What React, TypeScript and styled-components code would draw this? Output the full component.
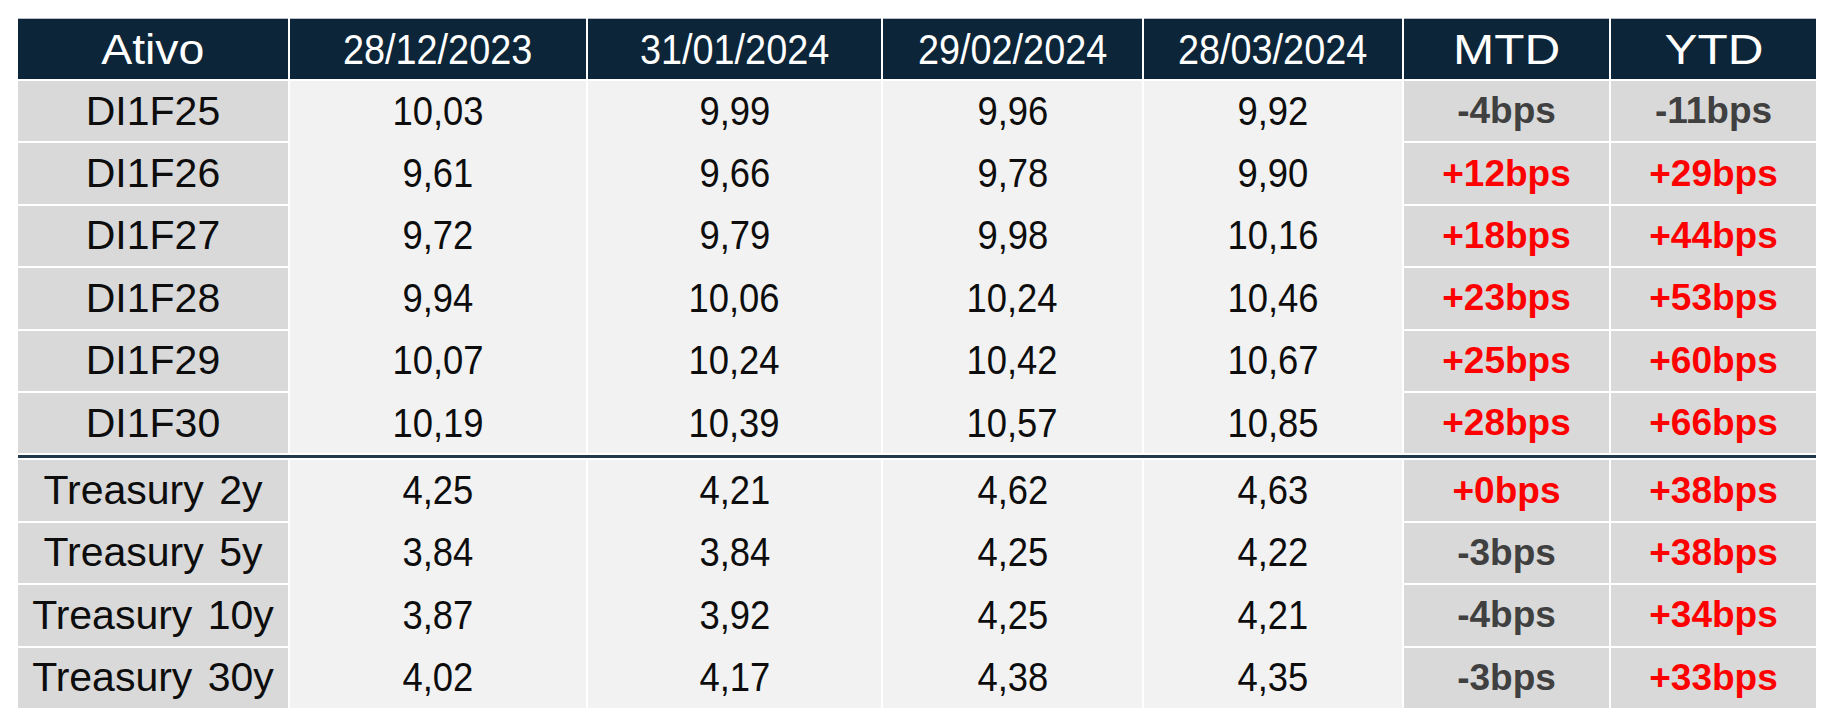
import React from 'react';
import styled, { createGlobalStyle, css } from 'styled-components';

const Color = {
    navy: '#0c2538',
    divider: '#22384b',
    gray: '#d9d9d9',
    light: '#f2f2f2',
    white: '#ffffff',
    text: '#0d0d0d',
    negative: '#404040',
    positive: '#ff0000',
};

const COLUMNS = '270px 296px 293px 259px 258px 205px 205px';

interface RowData {
    ativo: string;
    values: string[];
    mtd: string;
    ytd: string;
}

const GlobalStyle = createGlobalStyle`
    body {
        margin: 0;
        background-color: ${Color.white};
        font-family: 'Liberation Sans', Arial, sans-serif;
    }
`;

const Page = styled.div`
    padding: 18px 0 0 18px;
`;

const Table = styled.div`
    display: flex;
    flex-direction: column;
    width: 1798px;
`;

const Row = styled.div<{ header?: boolean }>`
    display: grid;
    grid-template-columns: ${COLUMNS};
    column-gap: 2px;
    height: ${(props) => (props.header ? '61px' : '62.4px')};
`;

const centered = css`
    display: flex;
    align-items: center;
    justify-content: center;
    box-sizing: border-box;
    white-space: nowrap;
    overflow: hidden;
`;

const HeadCell = styled.div`
    ${centered}
    background-color: ${Color.navy};
    border-top: 1px solid #b8bec4;
    color: ${Color.white};
    font-size: 43px;
`;

const NameCell = styled.div`
    ${centered}
    background-color: ${Color.gray};
    border-top: 2px solid ${Color.white};
    color: ${Color.text};
    font-size: 41px;
    word-spacing: 4px;
`;

const ValueCell = styled.div<{ first?: boolean }>`
    ${centered}
    background-color: ${Color.light};
    border-top: 2px solid ${(props) => (props.first ? Color.white : Color.light)};
    color: ${Color.text};
    font-size: 40px;
`;

const ChangeCell = styled.div<{ positive: boolean }>`
    ${centered}
    background-color: ${Color.gray};
    border-top: 2px solid ${Color.white};
    color: ${(props) => (props.positive ? Color.positive : Color.negative)};
    font-size: 37px;
    font-weight: bold;
`;

// the source slide squeezes numbers and widens some header labels
const Scaled = styled.span<{ scale?: number }>`
    display: inline-block;
    transform: scaleX(${(props) => props.scale ?? 0.91});
`;

const Divider = styled.div`
    margin-top: 2px;
    height: 3px;
    background-color: ${Color.divider};
`;

const dates = ['28/12/2023', '31/01/2024', '29/02/2024', '28/03/2024'];

const futures: RowData[] = [
    { ativo: 'DI1F25', values: ['10,03', '9,99', '9,96', '9,92'], mtd: '-4bps', ytd: '-11bps' },
    { ativo: 'DI1F26', values: ['9,61', '9,66', '9,78', '9,90'], mtd: '+12bps', ytd: '+29bps' },
    { ativo: 'DI1F27', values: ['9,72', '9,79', '9,98', '10,16'], mtd: '+18bps', ytd: '+44bps' },
    { ativo: 'DI1F28', values: ['9,94', '10,06', '10,24', '10,46'], mtd: '+23bps', ytd: '+53bps' },
    { ativo: 'DI1F29', values: ['10,07', '10,24', '10,42', '10,67'], mtd: '+25bps', ytd: '+60bps' },
    { ativo: 'DI1F30', values: ['10,19', '10,39', '10,57', '10,85'], mtd: '+28bps', ytd: '+66bps' },
];

const treasuries: RowData[] = [
    { ativo: 'Treasury 2y', values: ['4,25', '4,21', '4,62', '4,63'], mtd: '+0bps', ytd: '+38bps' },
    { ativo: 'Treasury 5y', values: ['3,84', '3,84', '4,25', '4,22'], mtd: '-3bps', ytd: '+38bps' },
    { ativo: 'Treasury 10y', values: ['3,87', '3,92', '4,25', '4,21'], mtd: '-4bps', ytd: '+34bps' },
    { ativo: 'Treasury 30y', values: ['4,02', '4,17', '4,38', '4,35'], mtd: '-3bps', ytd: '+33bps' },
];

const Group: React.FC<{ rows: RowData[] }> = ({ rows }) => (
    <>
        {rows.map((row, index) => (
            <Row key={row.ativo}>
                <NameCell>{row.ativo}</NameCell>
                {row.values.map((value, col) => (
                    <ValueCell key={col} first={index === 0}>
                        <Scaled>{value}</Scaled>
                    </ValueCell>
                ))}
                <ChangeCell positive={row.mtd.startsWith('+')}>{row.mtd}</ChangeCell>
                <ChangeCell positive={row.ytd.startsWith('+')}>{row.ytd}</ChangeCell>
            </Row>
        ))}
    </>
);

const App: React.FC = () => {
    return (
        <Page>
            <GlobalStyle />
            <Table>
                <Row header>
                    <HeadCell>
                        <Scaled scale={1.08}>Ativo</Scaled>
                    </HeadCell>
                    {dates.map((date) => (
                        <HeadCell key={date}>
                            <Scaled scale={0.88}>{date}</Scaled>
                        </HeadCell>
                    ))}
                    <HeadCell>
                        <Scaled scale={1.15}>MTD</Scaled>
                    </HeadCell>
                    <HeadCell>
                        <Scaled scale={1.15}>YTD</Scaled>
                    </HeadCell>
                </Row>
                <Group rows={futures} />
                <Divider />
                <Group rows={treasuries} />
            </Table>
        </Page>
    );
};

export default App;
